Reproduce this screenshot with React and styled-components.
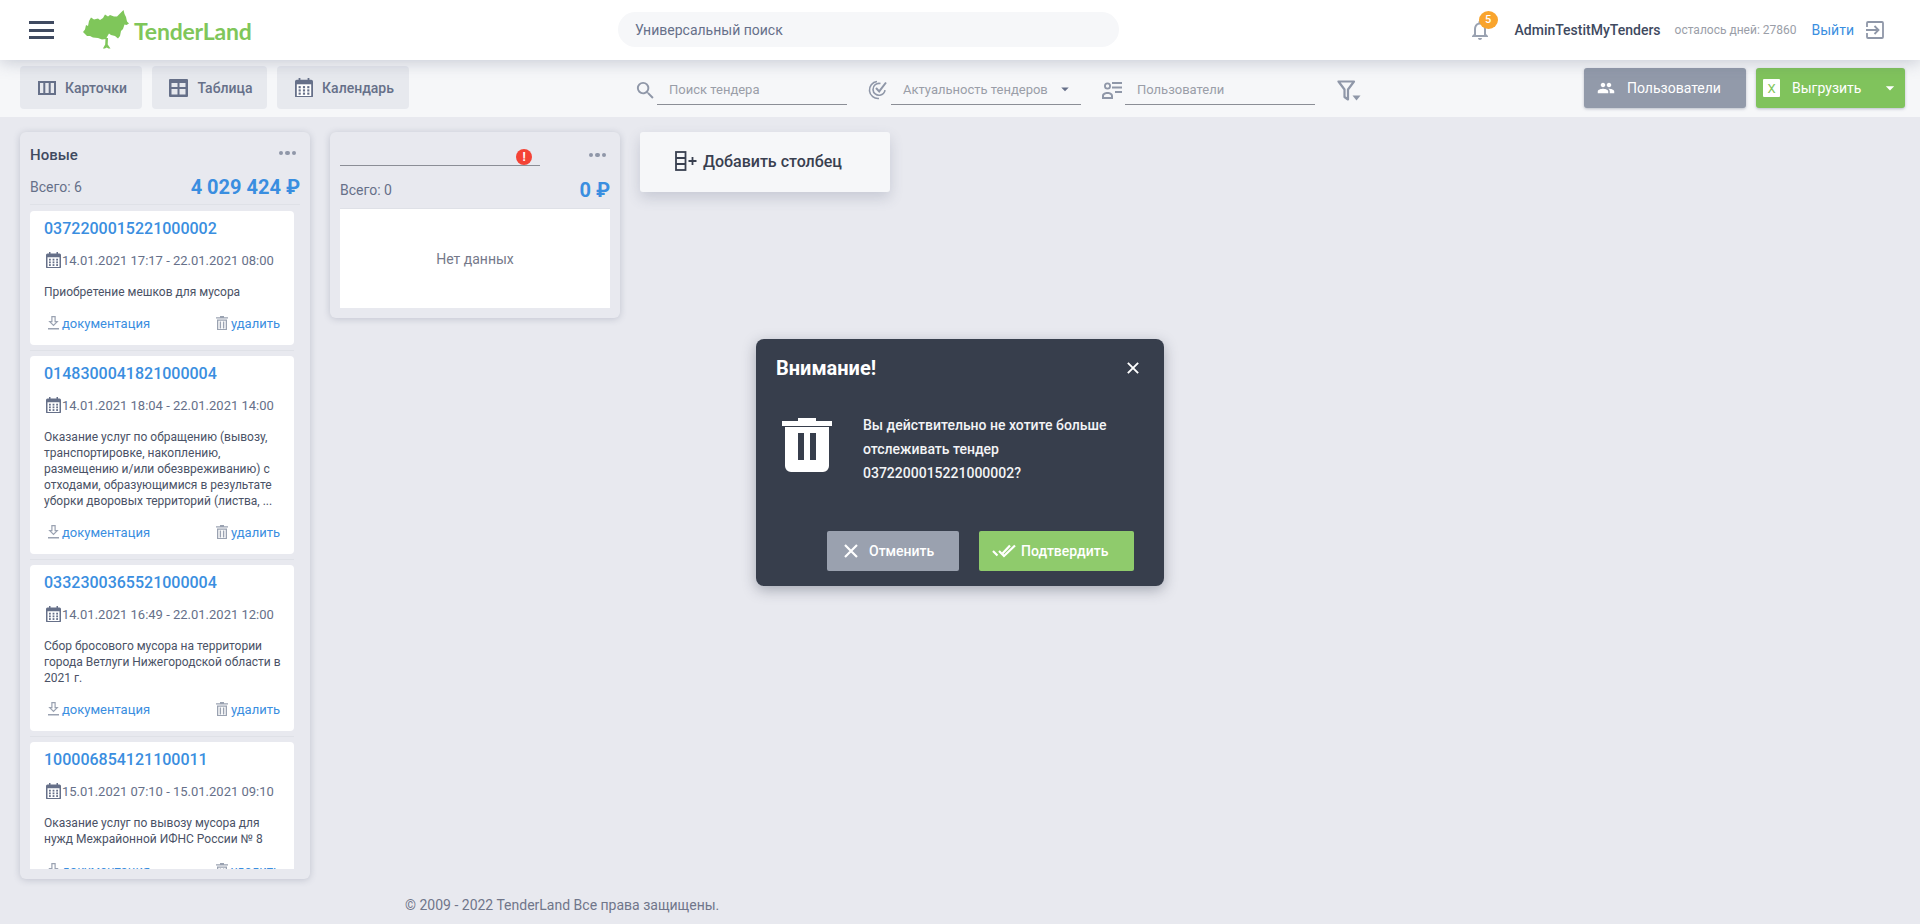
import React from 'react'
import styled, { createGlobalStyle } from 'styled-components'
import { MdSearch, MdPeople, MdNotificationsNone, MdArrowDropDown } from 'react-icons/md'

const GlobalStyle = createGlobalStyle`
  html, body {
    margin: 0;
    padding: 0;
    background: #e8e9ef;
    font-family: Roboto, "Liberation Sans", sans-serif;
    color: #394050;
    overflow: hidden;
  }
  * { box-sizing: border-box; }
`

const tenders = [
  {
    id: '0372200015221000002',
    dates: '14.01.2021 17:17 - 22.01.2021 08:00',
    text: 'Приобретение мешков для мусора',
  },
  {
    id: '0148300041821000004',
    dates: '14.01.2021 18:04 - 22.01.2021 14:00',
    text: 'Оказание услуг по обращению (вывозу, транспортировке, накоплению, размещению и/или обезвреживанию) с отходами, образующимися в результате уборки дворовых территорий (листва, ...',
  },
  {
    id: '0332300365521000004',
    dates: '14.01.2021 16:49 - 22.01.2021 12:00',
    text: 'Сбор бросового мусора на территории города Ветлуги Нижегородской области в 2021 г.',
  },
  {
    id: '100006854121100011',
    dates: '15.01.2021 07:10 - 15.01.2021 09:10',
    text: 'Оказание услуг по вывозу мусора для нужд Межрайонной ИФНС России № 8',
  },
  {
    id: '0373200041521000006',
    dates: '14.01.2021 12:00 - 22.01.2021 10:00',
    text: 'Оказание услуг по вывозу мусора',
  },
]

const CardsIcon = () => (
  <svg width="18" height="14" viewBox="0 0 18 14" fill="none" stroke="#667089" strokeWidth="2">
    <rect x="1" y="1" width="16" height="12" />
    <path d="M6.300 1v12M11.700 1v12" />
  </svg>
)

const TableIcon = () => (
  <svg width="19" height="18" viewBox="0 0 19 18" fill="#667089">
    <path
      fillRule="evenodd"
      d="M1 0h17a1 1 0 0 1 1 1v16a1 1 0 0 1-1 1H1a1 1 0 0 1-1-1V1a1 1 0 0 1 1-1zM2.500 4v4h6V4zM10.500 4v4h6V4zM2.500 10v5.500h6V10zM10.500 10v5.500h6V10z"
    />
  </svg>
)

const CalendarIcon = ({ size = 20, color = '#667089' }) => (
  <svg width={size} height={size * 1.1} viewBox="0 0 20 22">
    <path
      fill={color}
      d="M4 0h2v2h8V0h2v2h2a2 2 0 0 1 2 2v16a2 2 0 0 1-2 2H2a2 2 0 0 1-2-2V4a2 2 0 0 1 2-2h2z"
    />
    <rect x="2" y="7" width="16" height="13" fill="#fff" />
    <g fill={color}>
      <rect x="4" y="9" width="2.400" height="2.400" />
      <rect x="8.800" y="9" width="2.400" height="2.400" />
      <rect x="13.600" y="9" width="2.400" height="2.400" />
      <rect x="4" y="12.600" width="2.400" height="2.400" />
      <rect x="8.800" y="12.600" width="2.400" height="2.400" />
      <rect x="13.600" y="12.600" width="2.400" height="2.400" />
      <rect x="4" y="16.200" width="2.400" height="2.400" />
      <rect x="8.800" y="16.200" width="2.400" height="2.400" />
      <rect x="13.600" y="16.200" width="2.400" height="2.400" />
    </g>
  </svg>
)

const ActualityIcon = () => (
  <svg width="20" height="20" viewBox="0 0 20 20" fill="none" stroke="#8f97a8" strokeWidth="1.600">
    <path d="M9 1.500a8.500 8.500 0 0 0 2 17" />
    <path d="M12.500 3.600a6 6 0 0 0-7.500 6 6 6 0 0 0 7 5.600a6 6 0 0 0 5-5" />
    <path d="M8 8l3.200 3.400L18 2.500" strokeWidth="2" />
  </svg>
)

const UsersListIcon = () => (
  <svg width="21" height="20" viewBox="0 0 21 20" fill="#8f97a8">
    <circle cx="5.500" cy="6" r="2.600" fill="none" stroke="#8f97a8" strokeWidth="1.800" />
    <path d="M0 19v-3c0-3 3-4 5.500-4s5.500 1 5.500 4v3zM2 17h7v-1c0-1.500-2-2-3.500-2S2 14.500 2 16z" fillRule="evenodd" />
    <rect x="10" y="2" width="10" height="2" />
    <rect x="10" y="6.500" width="10" height="2" />
    <rect x="13" y="11" width="7" height="2" />
  </svg>
)

const FilterIcon = () => (
  <svg width="24" height="22" viewBox="0 0 24 22" fill="none" stroke="#8f97a8" strokeWidth="2.200">
    <path d="M1.500 1.500h15.500l-6 8v10l-3.500-2.500v-7.500z" strokeLinejoin="round" />
    <path d="M15.500 15.500h8l-4 5z" fill="#8f97a8" stroke="none" />
  </svg>
)

const ExitIcon = () => (
  <svg width="18" height="18" viewBox="0 0 18 18" fill="none" stroke="#8f97a8" strokeWidth="1.800">
    <path d="M1 6V2a1 1 0 0 1 1-1h14a1 1 0 0 1 1 1v14a1 1 0 0 1-1 1H2a1 1 0 0 1-1-1v-4" />
    <path d="M0 9h12M8.500 5l4 4-4 4" />
  </svg>
)

const DownloadIcon = () => (
  <svg width="11" height="14" viewBox="0 0 11 14" fill="#9aa2b1">
    <path d="M3.300 0h4.400v5h3L5.500 10.200.3 5h3zM4.500 1.200v5H3.100l2.400 2.400 2.400-2.400H6.500v-5z" fillRule="evenodd" />
    <rect x="0" y="12" width="11" height="1.500" />
  </svg>
)

const TrashIcon = ({ size = 12 }) => (
  <svg width={size} height={size * 1.200} viewBox="0 0 12 14.400" fill="#9aa2b1">
    <path d="M0 1.200h4V0h4v1.200h4v1.300H0zM1 3.500h10v10a1 1 0 0 1-1 1H2a1 1 0 0 1-1-1zM2.300 4.800v8.300h7.400V4.800z" fillRule="evenodd" />
    <rect x="3.700" y="5.500" width="1.400" height="7" />
    <rect x="6.900" y="5.500" width="1.400" height="7" />
  </svg>
)

const BigTrashIcon = () => (
  <svg width="50" height="54" viewBox="0 0 50 54" fill="#fff">
    <path d="M0 3h16V0h18v3h16v5H0z" />
    <path d="M3 9h44v39a6 6 0 0 1-6 6H9a6 6 0 0 1-6-6zM16 15v27h6V15zM28 15v27h6V15z" fillRule="evenodd" />
  </svg>
)

const AddColumnIcon = () => (
  <svg width="22" height="20" viewBox="0 0 22 20" fill="none" stroke="#394050" strokeWidth="1.800">
    <rect x="1" y="1" width="9.500" height="18" />
    <path d="M1 7h9.500M1 13h9.500" />
    <path d="M13.500 10h8M17.500 6v8" />
  </svg>
)

const CrossIcon = ({ size = 14, width = 2.200 }) => (
  <svg width={size} height={size} viewBox="0 0 14 14" fill="none" stroke="#fff" strokeWidth={width}>
    <path d="M1 1l12 12M13 1L1 13" />
  </svg>
)

const DoubleCheckIcon = () => (
  <svg width="24" height="14" viewBox="0 0 24 14" fill="none" stroke="#fff" strokeWidth="2.200">
    <path d="M1 7l4.500 4.500" />
    <path d="M7 7l5 5L23 1.500" />
    <path d="M10.500 9.500L18 1.500" />
  </svg>
)

const LogoTree = () => (
  <svg width="46" height="40" viewBox="0 0 46 40" fill="#7fc65a">
    <path d="M0 22L2 19.500 3 15 5 16 6 11 8 7.500 11 9.500 15 8.500 17 10 20 8 22 4.500 25 6.500 27 5 31 6.500 34 6.500 37 3.500 40.500 0 41.500 4 43 7 44 11.500 46 13.500 43.500 15 41.500 14.500 40 19 38 21 37 26 35 28.500 32 26 28 25 26 23.500 24.500 26 23 29 19 29.500 15 28 10 27.500 7 26 4 26 2 24z" />
    <path d="M22.500 28h2.500l-.300 6.500 2.800 4h-2l-1.800-1-1.800 1h-2l2.300-4z" />
  </svg>
)

const Page = styled.div`
  width: 1920px;
  height: 924px;
  display: flex;
  flex-direction: column;
  position: relative;
  overflow: hidden;
`

const Header = styled.header`
  height: 60px;
  flex: none;
  display: flex;
  align-items: center;
  background: #fff;
  box-shadow: 0 2px 16px rgba(70, 80, 110, 0.28);
  position: relative;
  z-index: 2;
`

const Brand = styled.div`
  width: 618px;
  flex: none;
  display: flex;
  align-items: center;
  padding-left: 29px;
`

const Burger = styled.div`
  width: 25px;
  height: 18px;
  margin-right: 29px;
  border-top: 3px solid #3f4a60;
  border-bottom: 3px solid #3f4a60;
  position: relative;
  &::after {
    content: '';
    position: absolute;
    left: 0;
    right: 0;
    top: 4.500px;
    height: 3px;
    background: #3f4a60;
  }
`

const BrandName = styled.span`
  font-family: Lato, sans-serif;
  font-weight: 700;
  font-size: 23px;
  letter-spacing: -0.200px;
  color: #7fc65a;
  margin-left: 5px;
  margin-top: 1px;
`

const GlobalSearch = styled.div`
  width: 501px;
  height: 35px;
  flex: none;
  display: flex;
  align-items: center;
  padding-left: 17px;
  margin-bottom: 1px;
  background: #f6f7f9;
  border-radius: 18px;
  font-size: 14px;
  color: #667089;
`

const HeaderRight = styled.div`
  margin-left: auto;
  padding-right: 36px;
  display: flex;
  align-items: center;
`

const Bell = styled.div`
  position: relative;
  width: 24px;
  height: 24px;
  margin-right: 23px;
  margin-top: -1px;
  color: #9aa2b1;
  font-size: 24px;
  display: flex;
`

const BellBadge = styled.span`
  position: absolute;
  left: 11px;
  top: -7px;
  width: 19px;
  height: 18px;
  border-radius: 50%;
  background: #f9a42d;
  color: #fff;
  font-size: 11px;
  font-weight: 500;
  display: flex;
  align-items: center;
  justify-content: center;
`

const UserName = styled.span`
  font-size: 14px;
  font-weight: 500;
  color: #3f4a60;
  margin-right: 14px;
`

const DaysLeft = styled.span`
  font-size: 12px;
  color: #9a9ea8;
  margin-right: 15px;
`

const LogoutLink = styled.a`
  font-size: 14px;
  color: #3a8ee0;
  margin-right: 12px;
`

const LogoutIcon = styled.span`
  display: flex;
`

const Toolbar = styled.div`
  height: 57px;
  flex: none;
  display: flex;
  align-items: center;
  background: #f6f7f9;
`

const Tabs = styled.div`
  width: 636px;
  flex: none;
  display: flex;
  gap: 10px;
  padding-left: 20px;
  margin-bottom: 2px;
`

const Tab = styled.div`
  height: 43px;
  width: ${props => props.$width}px;
  display: flex;
  align-items: center;
  justify-content: center;
  gap: 9px;
  padding-left: 3px;
  background: #e7e9ee;
  border-radius: 4px;
  font-size: 14px;
  font-weight: 500;
  color: #667089;
`

const Filters = styled.div`
  display: flex;
  align-items: center;
  height: 100%;
`

const Filter = styled.div`
  display: flex;
  align-items: flex-start;
  margin-right: ${props => props.$gap}px;
`

const FilterIconSlot = styled.div`
  width: 23px;
  margin-left: -2px;
  height: 30px;
  color: #8f97a8;
  font-size: 27px;
  display: flex;
  align-items: center;
  padding-top: 6px;
`

const FilterField = styled.div`
  width: ${props => props.$width}px;
  height: 33px;
  padding: 10px 0 0 12px;
  border-bottom: 1px solid #8b8e96;
  font-size: 13px;
  line-height: 15px;
  color: #9a9ea8;
  display: flex;
  justify-content: space-between;
`

const Caret = styled.span`
  color: #667089;
  font-size: 18px;
  margin: -2px 7px 0 0;
  display: flex;
`

const FilterTrigger = styled.div`
  display: flex;
  margin-left: 2px;
  margin-top: 4px;
`

const ToolbarActions = styled.div`
  margin-left: auto;
  padding-right: 15px;
  display: flex;
  gap: 10px;
  margin-bottom: 1px;
`

const ActionButton = styled.div`
  height: 40px;
  width: ${props => props.$width}px;
  display: flex;
  align-items: center;
  border-radius: 3px;
  background: ${props => props.$color};
  color: #fff;
  font-size: 14px;
  box-shadow: 0 1px 3px rgba(70, 80, 110, 0.35);
`

const UsersGlyph = styled.span`
  font-size: 18px;
  display: flex;
  margin: 0 12px 0 13px;
`

const ExcelBadge = styled.span`
  width: 17px;
  height: 18px;
  margin: 0 12px 0 7px;
  background: #fff;
  border-radius: 1px;
  color: #7fc65a;
  font-size: 13px;
  font-weight: 400;
  display: flex;
  align-items: center;
  justify-content: center;
`

const ExportCaret = styled.span`
  margin-left: auto;
  margin-right: 5px;
  font-size: 20px;
  display: flex;
`

const Board = styled.main`
  flex: 1;
  min-height: 0;
  display: flex;
  align-items: flex-start;
  gap: 20px;
  padding: 15px 0 0 20px;
`

const Column = styled.section`
  width: 290px;
  height: ${props => props.$height}px;
  flex: none;
  padding: ${props => props.$top}px 10px 0;
  background: #e8e9ef;
  border-radius: 6px;
  box-shadow: 0 1px 7px rgba(70, 80, 110, 0.24);
  overflow: hidden;
  display: flex;
  flex-direction: column;
`

const ColumnHead = styled.div`
  height: ${props => props.$height}px;
  flex: none;
  display: flex;
  align-items: center;
  justify-content: space-between;
`

const ColumnTitle = styled.h2`
  margin: 0;
  font-size: 15px;
  font-weight: 500;
  color: #3f4a60;
`

const Dots = styled.div`
  display: flex;
  gap: 2px;
  margin-right: 4px;
  margin-top: ${props => props.$shift || -3}px;
  i {
    width: 4.500px;
    height: 4.500px;
    border-radius: 50%;
    background: #8f97a8;
  }
`

const TitleInput = styled.div`
  width: 200px;
  height: 26px;
  border-bottom: 1px solid #8b8e96;
  position: relative;
  margin-bottom: 2px;
`

const ErrorMark = styled.span`
  position: absolute;
  right: 8px;
  top: 9px;
  width: 16px;
  height: 16px;
  border-radius: 50%;
  background: #f44336;
  color: #fff;
  font-size: 12px;
  font-weight: 700;
  display: flex;
  align-items: center;
  justify-content: center;
`

const Totals = styled.div`
  height: ${props => props.$height}px;
  flex: none;
  display: flex;
  align-items: center;
  justify-content: space-between;
  border-bottom: 1px solid #dfe1e7;
  font-size: 14px;
  color: #667089;
  padding-top: ${props => props.$pad}px;
`

const Sum = styled.span`
  font-size: 20px;
  font-weight: 700;
  color: #3a8ee0;
`

const CardList = styled.div`
  width: 264px;
  flex: 1;
  min-height: 0;
  margin-top: 6px;
  margin-bottom: 10px;
  overflow: hidden;
`

const CardSlot = styled.div`
  padding-bottom: 5px;
  margin-bottom: 5px;
  border-bottom: 1px solid #dfe1e7;
`

const Card = styled.article`
  background: #fff;
  border-radius: 4px;
  padding: 6px 14px 12px;
`

const CardId = styled.a`
  display: block;
  font-size: 16px;
  font-weight: 500;
  line-height: 24px;
  color: #3a8ee0;
`

const CardDates = styled.div`
  display: flex;
  align-items: center;
  gap: 1px;
  height: 20px;
  margin-top: 9px;
  padding-left: 2px;
  font-size: 13px;
  color: #667089;
  white-space: nowrap;
`

const CardText = styled.p`
  margin: 14px -4px 0 0;
  font-size: 12px;
  line-height: 16px;
  color: #4a5266;
`

const CardLinks = styled.div`
  margin-top: 13px;
  height: 20px;
  display: flex;
  align-items: center;
  justify-content: space-between;
  padding-left: 4px;
`

const CardLink = styled.a`
  display: flex;
  align-items: center;
  gap: 3px;
  font-size: 13px;
  color: #3a8ee0;
`

const EmptyState = styled.div`
  height: 99px;
  display: flex;
  align-items: center;
  justify-content: center;
  background: #fff;
  font-size: 14px;
  color: #75798a;
`

const AddColumn = styled.button`
  width: 250px;
  height: 60px;
  flex: none;
  display: flex;
  align-items: center;
  gap: 6px;
  padding: 0 0 2px 35px;
  border: 0;
  border-radius: 3px;
  background: #f6f7f9;
  box-shadow: 0 6px 14px rgba(70, 80, 110, 0.2);
  font-family: inherit;
  font-size: 16px;
  font-weight: 500;
  color: #394050;
`

const Footer = styled.footer`
  height: 40px;
  flex: none;
  padding: 11px 0 0 405px;
  font-size: 14px;
  line-height: 20px;
  color: #70768a;
`

const Dialog = styled.div`
  position: absolute;
  left: 756px;
  top: 339px;
  width: 408px;
  height: 247px;
  padding: 16px 30px 15px 20px;
  display: flex;
  flex-direction: column;
  background: #373e4c;
  border-radius: 8px;
  box-shadow: 0 4px 14px rgba(40, 48, 70, 0.35);
  color: #fff;
  z-index: 5;
`

const DialogHead = styled.div`
  display: flex;
  align-items: center;
  justify-content: space-between;
  height: 26px;
  margin-right: -5px;
`

const DialogTitle = styled.h3`
  margin: 0;
  font-size: 20px;
  font-weight: 700;
  color: #fff;
`

const DialogBody = styled.div`
  display: flex;
  margin-top: 37px;
  padding-left: 6px;
`

const DialogText = styled.p`
  margin: -5px 0 0 31px;
  font-size: 14px;
  font-weight: 500;
  line-height: 24px;
  color: #f3f4f6;
`

const DialogActions = styled.div`
  margin-top: auto;
  display: flex;
  justify-content: flex-end;
  gap: 20px;
`

const DialogButton = styled.div`
  width: ${props => props.$width}px;
  height: 40px;
  display: flex;
  align-items: center;
  gap: ${props => props.$gap}px;
  padding-left: ${props => props.$indent}px;
  border-radius: 2px;
  background: ${props => props.$color};
  font-size: 14px;
  font-weight: 500;
  color: #fff;
`

const TenderCard = ({ tender }) => (
  <CardSlot>
    <Card>
      <CardId>{tender.id}</CardId>
      <CardDates>
        <CalendarIcon size={15} />
        {tender.dates}
      </CardDates>
      <CardText>{tender.text}</CardText>
      <CardLinks>
        <CardLink>
          <DownloadIcon />
          документация
        </CardLink>
        <CardLink>
          <TrashIcon />
          удалить
        </CardLink>
      </CardLinks>
    </Card>
  </CardSlot>
)

const App = () => (
  <Page>
    <GlobalStyle />
    <Header>
      <Brand>
        <Burger />
        <LogoTree />
        <BrandName>TenderLand</BrandName>
      </Brand>
      <GlobalSearch>Универсальный поиск</GlobalSearch>
      <HeaderRight>
        <Bell>
          <MdNotificationsNone />
          <BellBadge>5</BellBadge>
        </Bell>
        <UserName>AdminTestitMyTenders</UserName>
        <DaysLeft>осталось дней: 27860</DaysLeft>
        <LogoutLink>Выйти</LogoutLink>
        <LogoutIcon>
          <ExitIcon />
        </LogoutIcon>
      </HeaderRight>
    </Header>

    <Toolbar>
      <Tabs>
        <Tab $width={122}>
          <CardsIcon />
          Карточки
        </Tab>
        <Tab $width={115}>
          <TableIcon />
          Таблица
        </Tab>
        <Tab $width={132}>
          <CalendarIcon size={18} />
          Календарь
        </Tab>
      </Tabs>
      <Filters>
        <Filter $gap={23}>
          <FilterIconSlot>
            <MdSearch />
          </FilterIconSlot>
          <FilterField $width={190}>Поиск тендера</FilterField>
        </Filter>
        <Filter $gap={23}>
          <FilterIconSlot>
            <ActualityIcon />
          </FilterIconSlot>
          <FilterField $width={190}>
            Актуальность тендеров
            <Caret>
              <MdArrowDropDown />
            </Caret>
          </FilterField>
        </Filter>
        <Filter $gap={20}>
          <FilterIconSlot>
            <UsersListIcon />
          </FilterIconSlot>
          <FilterField $width={190}>Пользователи</FilterField>
        </Filter>
        <FilterTrigger>
          <FilterIcon />
        </FilterTrigger>
      </Filters>
      <ToolbarActions>
        <ActionButton $width={162} $color="#929aaa">
          <UsersGlyph>
            <MdPeople />
          </UsersGlyph>
          Пользователи
        </ActionButton>
        <ActionButton $width={149} $color="#80c35c">
          <ExcelBadge>X</ExcelBadge>
          Выгрузить
          <ExportCaret>
            <MdArrowDropDown />
          </ExportCaret>
        </ActionButton>
      </ToolbarActions>
    </Toolbar>

    <Board>
      <Column $height={747} $top={10}>
        <ColumnHead $height={25}>
          <ColumnTitle>Новые</ColumnTitle>
          <Dots>
            <i />
            <i />
            <i />
          </Dots>
        </ColumnHead>
        <Totals $height={38} $pad={3}>
          Всего: 6
          <Sum>4 029 424 ₽</Sum>
        </Totals>
        <CardList>
          {tenders.map(tender => (
            <TenderCard key={tender.id} tender={tender} />
          ))}
        </CardList>
      </Column>

      <Column $height={186} $top={8}>
        <ColumnHead $height={27}>
          <TitleInput>
            <ErrorMark>!</ErrorMark>
          </TitleInput>
          <Dots $shift={3}>
            <i />
            <i />
            <i />
          </Dots>
        </ColumnHead>
        <Totals $height={42} $pad={4}>
          Всего: 0
          <Sum>0 ₽</Sum>
        </Totals>
        <EmptyState>Нет данных</EmptyState>
      </Column>

      <AddColumn>
        <AddColumnIcon />
        Добавить столбец
      </AddColumn>
    </Board>

    <Footer>© 2009 - 2022 TenderLand Все права защищены.</Footer>

    <Dialog>
      <DialogHead>
        <DialogTitle>Внимание!</DialogTitle>
        <CrossIcon size={12} />
      </DialogHead>
      <DialogBody>
        <BigTrashIcon />
        <DialogText>
          Вы действительно не хотите больше
          <br />
          отслеживать тендер
          <br />
          0372200015221000002?
        </DialogText>
      </DialogBody>
      <DialogActions>
        <DialogButton $width={132} $gap={11} $indent={17} $color="#9aa1af">
          <CrossIcon />
          Отменить
        </DialogButton>
        <DialogButton $width={155} $gap={5} $indent={13} $color="#8fcb6c">
          <DoubleCheckIcon />
          Подтвердить
        </DialogButton>
      </DialogActions>
    </Dialog>
  </Page>
)

export default App
